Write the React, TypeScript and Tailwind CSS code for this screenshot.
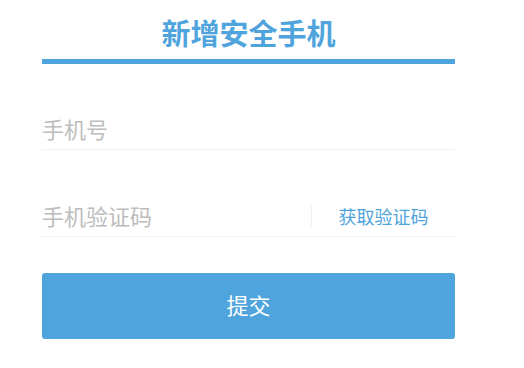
import { useState } from "react";

const cjk = { fontFamily: '"Noto Sans CJK SC", "Noto Sans", sans-serif' };

export default function App() {
  const [phone, setPhone] = useState("");
  const [code, setCode] = useState("");

  return (
    <div className="w-[524px] h-[368px] bg-white" style={cjk}>
      <div className="ml-[42px] w-[413px]">
        {/* Title */}
        <h1 className="pt-[12px] pb-[6px] leading-[41px] text-center text-[29px] font-bold text-[#4fa4dd] border-b-[5px] border-[#4fa4dd]">
          新增安全手机
        </h1>

        {/* Phone number */}
        <div className="mt-[44px] h-[42px] border-b border-[#f2f2f2] flex items-center">
          <input
            value={phone}
            onChange={(e) => setPhone(e.target.value)}
            placeholder="手机号"
            className="w-full bg-transparent outline-none text-[22px] text-[#333] placeholder:text-[#bdbdbd]"
          />
        </div>

        {/* Verification code */}
        <div className="mt-[45px] h-[42px] border-b border-[#f2f2f2] flex items-center">
          <input
            value={code}
            onChange={(e) => setCode(e.target.value)}
            placeholder="手机验证码"
            className="flex-1 min-w-0 bg-transparent outline-none text-[22px] text-[#333] placeholder:text-[#bdbdbd]"
          />
          <button className="w-[144px] h-[20px] border-l border-[#eeeeee] flex items-center justify-center text-[18px] leading-none text-[#4fa4dd]">
            获取验证码
          </button>
        </div>

        {/* Submit */}
        <button className="mt-[36px] w-full h-[66px] pb-[3px] rounded-[3px] bg-[#4fa4dd] text-white text-[22px]">
          提交
        </button>
      </div>
    </div>
  );
}
